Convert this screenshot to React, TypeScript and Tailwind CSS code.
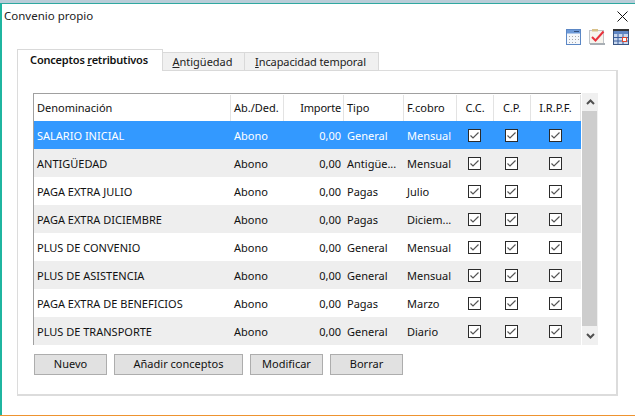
import React from "react";

const rows = [
  ["SALARIO INICIAL", "Abono", "0,00", "General", "Mensual"],
  ["ANTIGÜEDAD", "Abono", "0,00", "Antigüe...", "Mensual"],
  ["PAGA EXTRA JULIO", "Abono", "0,00", "Pagas", "Julio"],
  ["PAGA EXTRA DICIEMBRE", "Abono", "0,00", "Pagas", "Diciem..."],
  ["PLUS DE CONVENIO", "Abono", "0,00", "General", "Mensual"],
  ["PLUS DE ASISTENCIA", "Abono", "0,00", "General", "Mensual"],
  ["PAGA EXTRA DE BENEFICIOS", "Abono", "0,00", "Pagas", "Marzo"],
  ["PLUS DE TRANSPORTE", "Abono", "0,00", "General", "Diario"],
];

function Check() {
  return (
    <div className="w-[13px] h-[13px] border border-[#2b2b2b] bg-white flex items-center justify-center">
      <svg width="11" height="11" viewBox="0 0 11 11" fill="none">
        <path d="M1.5 5.5 L4 8 L9.5 2.5" stroke="#555555" strokeWidth="1.2" />
      </svg>
    </div>
  );
}

function Btn({ label, w }: { label: string; w: string }) {
  return (
    <div className={`${w} h-[21px] bg-[#e1e1e1] border border-[#adadad] flex items-center justify-center text-[#111]`}>
      {label}
    </div>
  );
}

export default function App() {
  return (
    <div
      className="w-[635px] h-[416px] bg-white flex flex-col overflow-hidden text-[11px] text-black"
      style={{ fontFamily: '"Noto Sans", sans-serif' }}
    >
      <div className="h-[3px] bg-[#b9cdd8]" />
      <div className="h-px bg-[#2fa8a0]" />
      <div className="flex-1 flex border-l-2 border-[#1fb5a0] min-h-0">
        <div className="flex-1 flex flex-col min-w-0">
          <div className="h-[24px] flex items-center justify-between pl-[2px] pr-[7px]">
            <span className="text-[11.5px] text-[#222]">Convenio propio</span>
            <svg width="11" height="11" viewBox="0 0 11 11">
              <path d="M0.5 0.5 L10.5 10.5 M10.5 0.5 L0.5 10.5" stroke="#111" strokeWidth="1" />
            </svg>
          </div>
          <div className="h-[21px] flex items-start justify-end pr-[6px] gap-[8px] pt-[1px]">
            <svg width="15" height="16" viewBox="0 0 15 16">
              <rect x="0.5" y="0.5" width="14" height="15" fill="#f4f7fb" stroke="#5b87c5" />
              <rect x="1" y="1" width="13" height="3.5" fill="#6d9ad8" />
              <rect x="8" y="2" width="5" height="1" fill="#33517f" />
              <path d="M3 7h1v1H3zM6 7h1v1H6zM9 7h1v1H9zM12 7h1v1h-1zM3 10h1v1H3zM6 10h1v1H6zM9 10h1v1H9zM12 10h1v1h-1zM3 13h1v1H3zM6 13h1v1H6zM9 13h1v1H9z" fill="#a9a9a9" />
            </svg>
            <svg width="16" height="16" viewBox="0 0 16 16">
              <rect x="0.5" y="1.5" width="14" height="13" fill="#f6f4ee" stroke="#c2c6ca" />
              <rect x="1" y="14" width="15" height="2" fill="#a8aeb4" />
              <rect x="3" y="0" width="6" height="2.5" fill="#d8c189" />
              <path d="M3 8 L6.5 11.5 L14.5 2.5" stroke="#e8323c" strokeWidth="2" fill="none" />
            </svg>
            <svg width="16" height="16" viewBox="0 0 16 16">
              <rect x="0.5" y="1.5" width="15" height="14" fill="#c9d8ee" stroke="#3a5684" />
              <rect x="0" y="0" width="16" height="2" fill="#333" />
              <rect x="1" y="2" width="14" height="3" fill="#5f86c4" />
              <path d="M1 8.5h14M1 12h14M5 5v10M10 5v10" stroke="#3a5f9e" strokeWidth="1" />
              <rect x="9.5" y="8.5" width="4" height="4" fill="#fff" stroke="#e0452c" />
            </svg>
          </div>
          <div className="pl-[15px] pr-[17px] flex flex-col">
            <div className="flex items-end h-[22px] relative z-10">
              <div className="w-[146px] h-[22px] bg-white border border-b-0 border-[#d9d9d9] flex items-center justify-center pr-[2px] font-semibold text-[11px] tracking-[-0.2px] text-[#111]">
                <span>Conceptos <u>r</u>etributivos</span>
              </div>
              <div className="w-[82px] h-[19px] bg-[#f0f0f0] border border-l-0 border-[#d9d9d9] flex items-center justify-center pt-px pr-[2px] text-[#222]">
                <span><u>A</u>ntigüedad</span>
              </div>
              <div className="w-[134px] h-[19px] bg-[#f0f0f0] border border-l-0 border-[#d9d9d9] flex items-center justify-center pt-px pr-[2px] text-[#222] tracking-[-0.1px]">
                <span><u>I</u>ncapacidad temporal</span>
              </div>
            </div>
            <div className="h-[326px] -mt-px bg-white border-2 border-t border-l border-[#dcdcdc] pl-[15px] pt-[22px]">
              <div className="flex items-start">
                <div className="w-[548px] border-t border-l border-[#a0a0a0]">
                  <div className="flex h-[27px] items-stretch bg-white text-[#111] pt-px">
                    <div className="w-[197px] flex items-center pl-[3px] border-r border-[#e3e3e3]">Denominación</div>
                    <div className="w-[53px] flex items-center pl-[3px] border-r border-[#e3e3e3]">Ab./Ded.</div>
                    <div className="w-[60px] flex items-center justify-end pr-[2px] tracking-[-0.2px] border-r border-[#e3e3e3]">Importe</div>
                    <div className="w-[60px] flex items-center pl-[3px] border-r border-[#e3e3e3]">Tipo</div>
                    <div className="w-[53px] flex items-center pl-[3px] border-r border-[#e3e3e3]">F.cobro</div>
                    <div className="w-[37px] flex items-center justify-center border-r border-[#e3e3e3]">C.C.</div>
                    <div className="w-[37px] flex items-center justify-center border-r border-[#e3e3e3]">C.P.</div>
                    <div className="w-[50px] flex items-center justify-center border-r border-[#e3e3e3]">I.R.P.F.</div>
                  </div>
                  {rows.map((r, i) => (
                    <div
                      key={r[0]}
                      className={`flex h-[28px] items-center ${
                        i === 0 ? "bg-[#3399ff] text-white" : i % 2 === 1 ? "bg-[#eeeeee] text-[#111]" : "bg-white text-[#111]"
                      }`}
                    >
                      <div className="w-[197px] pl-[3px] pt-[2px] whitespace-nowrap">{r[0]}</div>
                      <div className="w-[53px] pl-[3px] pt-[2px]">{r[1]}</div>
                      <div className="w-[60px] text-right pr-[3px] pt-[2px]">{r[2]}</div>
                      <div className="w-[60px] pl-[3px] pt-[2px] whitespace-nowrap">{r[3]}</div>
                      <div className="w-[53px] pl-[3px] pt-[2px] whitespace-nowrap">{r[4]}</div>
                      <div className="w-[37px] flex justify-center pr-[2px]"><Check /></div>
                      <div className="w-[37px] flex justify-center pr-[2px]"><Check /></div>
                      <div className="w-[50px] flex justify-center pr-[2px]"><Check /></div>
                    </div>
                  ))}
                </div>
                <div className="w-[16px] ml-[1px] h-[252px] bg-[#f0f0f0] flex flex-col">
                  <div className="h-[18px] flex items-center justify-center">
                    <svg width="9" height="6" viewBox="0 0 9 6"><path d="M1 5 L4.5 1.5 L8 5" stroke="#505050" strokeWidth="2" fill="none" /></svg>
                  </div>
                  <div className="flex-1 mr-px bg-[#cdcdcd]" />
                  <div className="h-[19px] flex items-center justify-center">
                    <svg width="9" height="6" viewBox="0 0 9 6"><path d="M1 1 L4.5 4.5 L8 1" stroke="#505050" strokeWidth="2" fill="none" /></svg>
                  </div>
                </div>
              </div>
              <div className="flex gap-[7px] mt-[9px] pl-px">
                <Btn label="Nuevo" w="w-[73px]" />
                <Btn label="Añadir conceptos" w="w-[129px]" />
                <Btn label="Modificar" w="w-[73px]" />
                <Btn label="Borrar" w="w-[73px]" />
              </div>
            </div>
          </div>
        </div>
      </div>
      <div className="h-px bg-[#ee9430]" />
    </div>
  );
}
